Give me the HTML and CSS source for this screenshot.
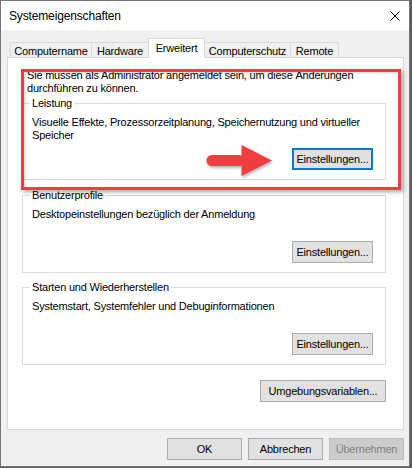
FILE: index.html
```html
<!DOCTYPE html>
<html lang="de">
<head>
<meta charset="utf-8">
<title>Systemeigenschaften</title>
<link rel="stylesheet" href="styles.css">
</head>
<body>
<div class="window">
  <div class="titlebar">
    <span class="title">Systemeigenschaften</span>
    <span class="close">
      <svg width="10" height="10" viewBox="0 0 10 10"><path d="M0.5 0.5 L9.5 9.5 M9.5 0.5 L0.5 9.5" stroke="#000" stroke-width="1" fill="none"/></svg>
    </span>
  </div>
  <div class="dialog">
    <div class="tabs">
      <div class="tab tab-name">Computername</div>
      <div class="tab tab-hw">Hardware</div>
      <div class="tab tab-adv active">Erweitert</div>
      <div class="tab tab-prot">Computerschutz</div>
      <div class="tab tab-rem">Remote</div>
    </div>
    <div class="panel">
      <p class="info">Sie müssen als Administrator angemeldet sein, um diese Änderungen<br>durchführen zu können.</p>
      <fieldset class="group group-perf">
        <legend>Leistung</legend>
        <p class="desc">Visuelle Effekte, Prozessorzeitplanung, Speichernutzung und virtueller<br>Speicher</p>
        <div class="actions"><button class="btn btn-settings btn-focus">Einstellungen...</button></div>
      </fieldset>
      <fieldset class="group group-profile">
        <legend>Benutzerprofile</legend>
        <p class="desc">Desktopeinstellungen bezüglich der Anmeldung</p>
        <div class="actions actions-low"><button class="btn btn-settings">Einstellungen...</button></div>
      </fieldset>
      <fieldset class="group group-start">
        <legend>Starten und Wiederherstellen</legend>
        <p class="desc">Systemstart, Systemfehler und Debuginformationen</p>
        <div class="actions actions-low"><button class="btn btn-settings">Einstellungen...</button></div>
      </fieldset>
      <div class="env-row"><button class="btn btn-env">Umgebungsvariablen...</button></div>
    </div>
    <div class="footer">
      <button class="btn btn-foot">OK</button>
      <button class="btn btn-foot">Abbrechen</button>
      <button class="btn btn-foot btn-disabled">Übernehmen</button>
    </div>
  </div>
  <div class="callout"></div>
  <svg class="arrow" width="80" height="45" viewBox="0 0 80 45">
    <defs>
      <filter id="sh" x="-20%" y="-20%" width="140%" height="160%">
        <feDropShadow dx="1" dy="2" stdDeviation="1.5" flood-color="#000" flood-opacity="0.3"/>
      </filter>
    </defs>
    <g filter="url(#sh)" fill="#f03d3f">
      <rect x="6.5" y="15" width="38" height="11" rx="5.5"/>
      <polygon points="41.5,5 72,20.5 41.5,36"/>
    </g>
  </svg>
</div>
</body>
</html>
```

FILE: styles.css
```css
* { box-sizing: border-box; }

html, body {
  margin: 0;
  padding: 0;
}

body {
  width: 412px;
  height: 468px;
  background: #5b5b5b;
  font-family: "Liberation Sans", Arial, sans-serif;
  font-size: 11px;
  line-height: 13px;
  color: #000;
  overflow: hidden;
}

.window {
  position: relative;
  width: 410px;
  height: 467px;
  border: 1px solid #767676;
  background: #f0f0f0;
  display: flex;
  flex-direction: column;
}

.titlebar {
  height: 29px;
  background: #fff;
  display: flex;
  align-items: center;
  justify-content: space-between;
  flex: none;
}

.title {
  padding-left: 8px;
  font-size: 12px;
  letter-spacing: -0.15px;
  line-height: 14px;
  padding-top: 1px;
}

.close {
  width: 28px;
  height: 29px;
  display: flex;
  align-items: center;
  justify-content: center;
}

.close svg { display: block; }

.dialog {
  flex: 1;
  padding: 8px 5px 0 6px;
  display: flex;
  flex-direction: column;
}

.tabs {
  height: 20px;
  display: flex;
  align-items: flex-end;
  padding-left: 3px;
  letter-spacing: -0.2px;
}

.tab {
  height: 16px;
  margin-right: -1px;
  border: 1px solid #d9d9d9;
  border-bottom: none;
  background: #f0f0f0;
  padding-top: 2px;
  text-align: center;
  white-space: nowrap;
}

.tab.active {
  position: relative;
  z-index: 1;
  height: 20px;
  padding-top: 3px;
  background: #fff;
}

.tab-name { width: 82px; }
.tab-hw { width: 58px; }
.tab-adv { width: 57px; }
.tab-prot { width: 87px; }
.tab-rem { width: 49px; }

.panel {
  margin-top: -1px;
  height: 373px;
  background: #fff;
  border: 1px solid #d9d9d9;
  padding: 11px 17px 0 14px;
  letter-spacing: -0.2px;
}

.info {
  margin: 0 0 2px 5px;
  white-space: nowrap;
}

.group {
  margin: 0;
  border: 1px solid #dcdcdc;
  padding: 0 12px 9px 9px;
  min-inline-size: 0;
}

.group legend {
  padding: 0 2px;
  margin-left: -2px;
  line-height: 13px;
}

.group-profile { margin-top: 9px; }
.group-start { margin-top: 8px; }

.desc {
  margin: 6px 0 0 0;
  white-space: nowrap;
}

.actions {
  display: flex;
  justify-content: flex-end;
  margin-top: 6px;
}

.actions-low { margin-top: 20px; }

.btn {
  height: 22px;
  border: 1px solid #adadad;
  background: #e1e1e1;
  font-family: "Liberation Sans", Arial, sans-serif;
  font-size: 11px;
  letter-spacing: -0.2px;
  line-height: 13px;
  color: #000;
  padding: 0;
  margin: 0;
  display: flex;
  align-items: center;
  justify-content: center;
}

.btn-settings { width: 81px; }

.btn-focus {
  border: 2px solid #0078d7;
}

.env-row {
  display: flex;
  justify-content: flex-end;
  margin-top: 15px;
}

.btn-env { width: 126px; }

.footer {
  display: flex;
  justify-content: flex-end;
  gap: 6px;
  margin-top: 8px;
}

.btn-foot { width: 75px; }

.btn-disabled {
  background: #cccccc;
  border-color: #bfbfbf;
  color: #838383;
}

.callout {
  position: absolute;
  left: 20px;
  top: 68px;
  width: 380px;
  height: 121px;
  border: 3px solid #f03d3f;
  box-shadow: 2px 2px 4px rgba(0, 0, 0, 0.35), inset 1px 1px 3px rgba(0, 0, 0, 0.2);
  pointer-events: none;
}

.arrow {
  position: absolute;
  left: 199px;
  top: 139px;
  display: block;
}
```
